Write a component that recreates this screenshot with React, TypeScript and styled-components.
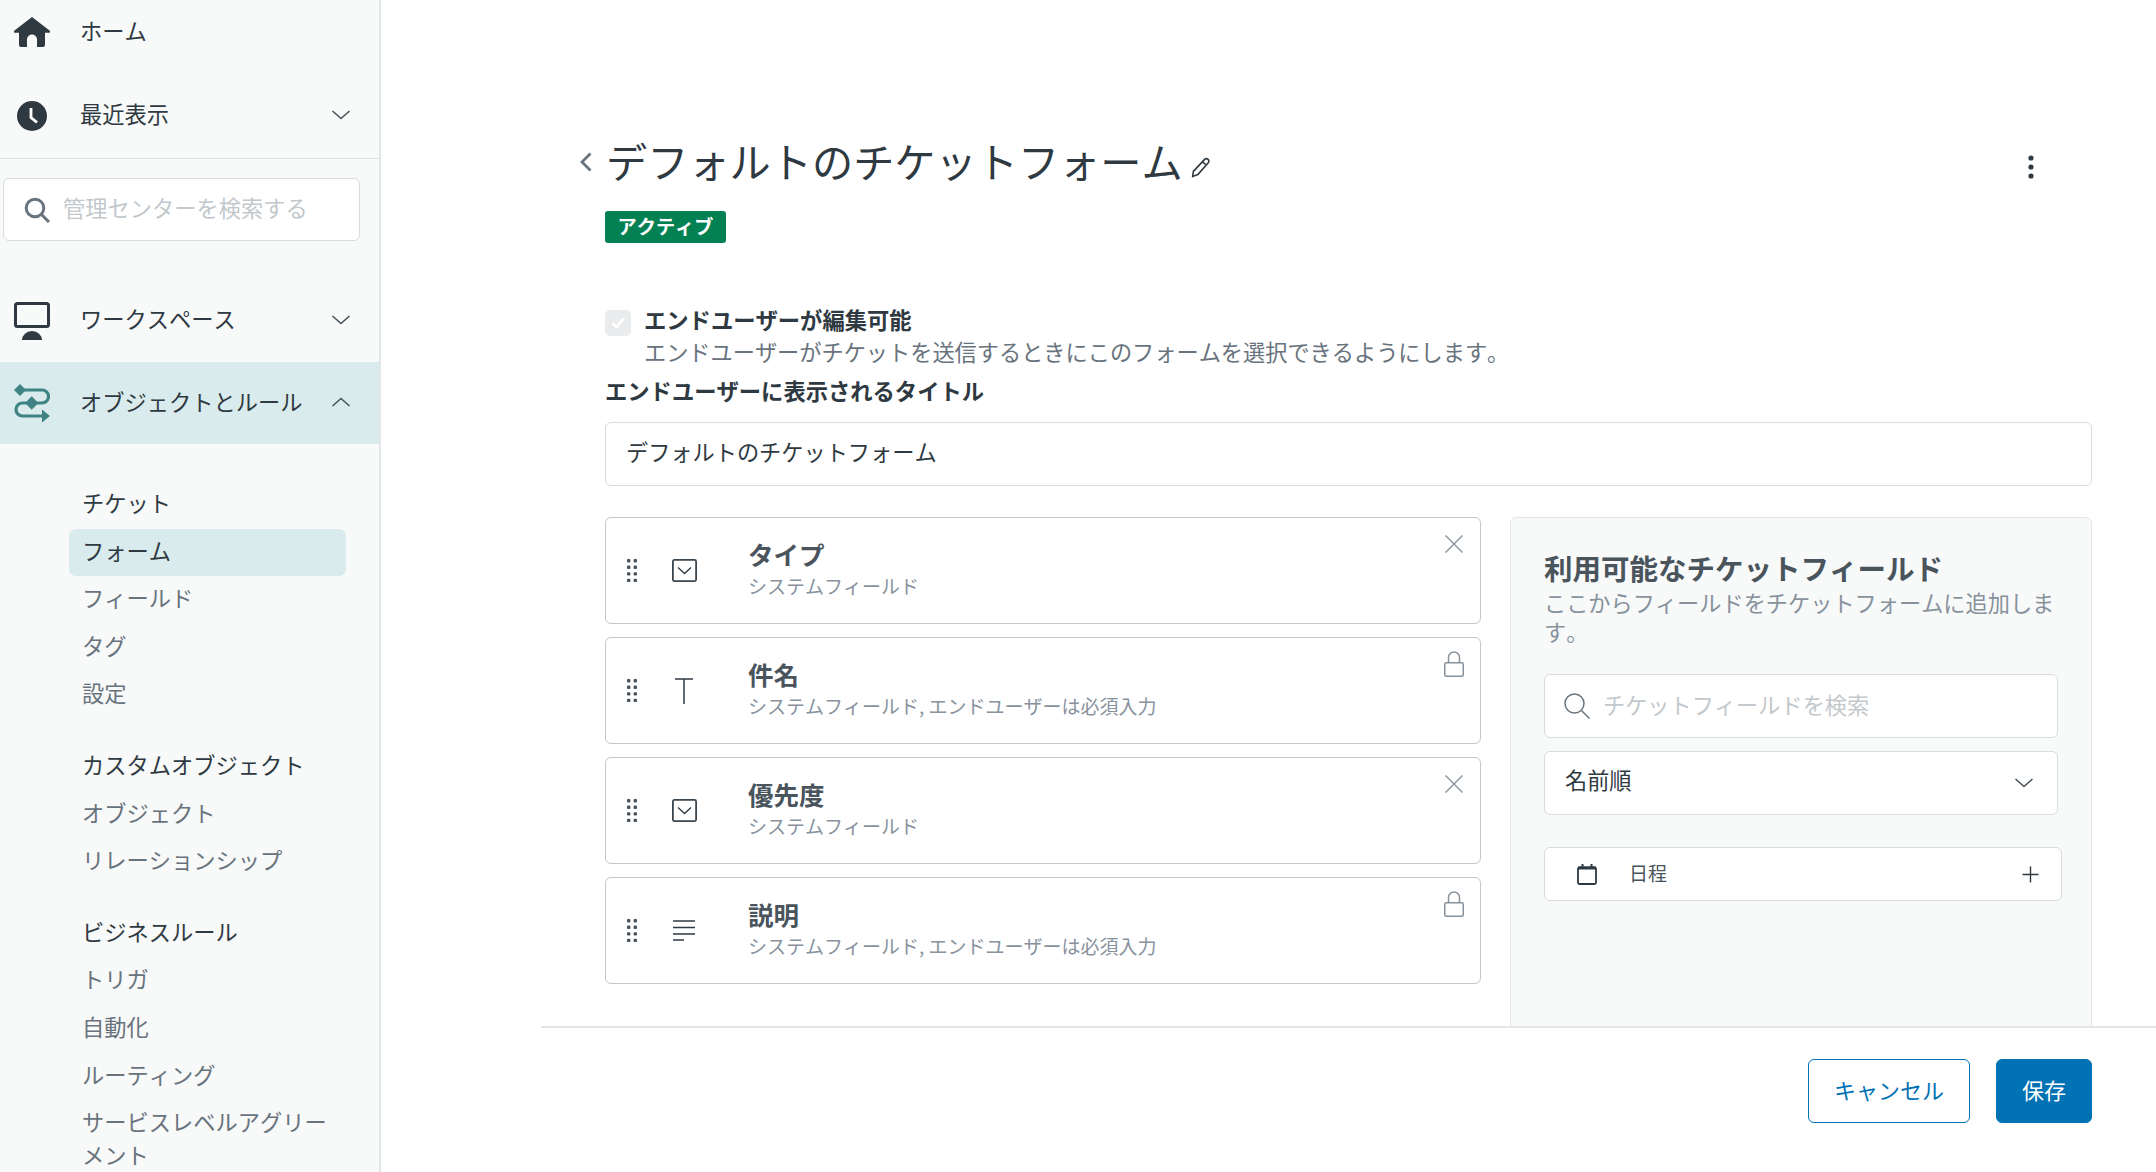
import React from "react";
import styled, { createGlobalStyle } from "styled-components";

const Global = createGlobalStyle`
  html, body { margin: 0; padding: 0; height: 100%; overflow: hidden; background: #fff; }
  #root { height: 100%; }
  * { box-sizing: border-box; }
  body {
    font-family: "Noto Sans CJK JP", "Noto Sans", sans-serif;
    color: #2f3941;
    font-kerning: none;
    text-spacing-trim: space-all;
  }
`;

const Page = styled.div`
  display: flex;
  width: 2156px;
  height: 1172px;
  overflow: hidden;
`;

const Sidebar = styled.aside`
  width: 381px;
  flex: none;
  height: 100%;
  background: #f8f9f9;
  border-right: 2px solid #e3e6e8;
  overflow: hidden;
`;

const TopNav = styled.div`
  border-bottom: 1px solid #dfe2e4;
  height: 159px;
`;

const NavRow = styled.div<{ $active?: boolean; $h?: number; $mb?: number }>`
  display: flex;
  align-items: center;
  height: ${(p) => p.$h ?? 83}px;
  margin-bottom: ${(p) => p.$mb ?? 0}px;
  padding: 0 28px 0 14px;
  background: ${(p) => (p.$active ? "#d9ebec" : "transparent")};
  font-size: 22.25px;
  color: #2f3941;
`;

const NavIconBox = styled.span`
  width: 36px;
  flex: none;
  display: flex;
  justify-content: center;
  align-items: center;
  margin-right: 30px;
`;

const NavLabel = styled.span`
  flex: 1;
  white-space: nowrap;
  padding-bottom: 5px;
`;

const NavChevron = styled.span`
  display: flex;
  padding-bottom: 2px;
`;

const SideSearch = styled.div`
  display: flex;
  align-items: center;
  width: 357px;
  height: 63px;
  margin: 19px 0 38px 3px;
  padding-left: 20px;
  background: #fff;
  border: 1px solid #d8dcde;
  border-radius: 6px;
  font-size: 22.25px;
  color: #c2c8cc;
  gap: 13px;
  white-space: nowrap;
`;

const Placeholder = styled.span`
  padding-bottom: 5px;
`;

const SubNav = styled.div`
  padding: 37px 33px 0 69px;
  display: flex;
  flex-direction: column;
  gap: 24px;
`;

const SubGroup = styled.div`
  display: flex;
  flex-direction: column;
`;

const SubItem = styled.div<{ $head?: boolean; $active?: boolean }>`
  min-height: 47.6px;
  padding: 5px 13px 9.5px;
  line-height: 33px;
  font-size: 22.25px;
  border-radius: 7px;
  color: ${(p) => (p.$head || p.$active ? "#2f3941" : "#68737d")};
  background: ${(p) => (p.$active ? "#d9ebec" : "transparent")};
`;

const Main = styled.main`
  flex: 1;
  min-width: 0;
  display: flex;
  flex-direction: column;
  padding-left: 160px;
  height: 100%;
`;

const Body = styled.div`
  height: 1026px;
  flex: none;
  overflow: hidden;
  padding: 134px 64px 0 64px;
`;

const TitleRow = styled.div`
  display: flex;
  align-items: center;
  height: 56px;
  margin-left: -25px;
`;

const BackIcon = styled.svg`
  flex: none;
  margin-right: 14px;
`;

const Title = styled.h1`
  margin: 0;
  padding-bottom: 5px;
  font-size: 41.2px;
  font-weight: 400;
  line-height: 56px;
  color: #2f3941;
  white-space: nowrap;
`;

const PencilIcon = styled.svg`
  flex: none;
  margin: 10px 0 0 8px;
`;

const KebabIcon = styled.svg`
  flex: none;
  margin-left: auto;
  margin-right: 58px;
  margin-top: 10px;
`;

const Badge = styled.div`
  display: flex;
  align-items: center;
  justify-content: center;
  width: 121px;
  height: 32px;
  margin-top: 21px;
  padding-bottom: 2px;
  background: #038153;
  border-radius: 3px;
  color: #fff;
  font-size: 19.2px;
  font-weight: 700;
`;

const CheckRow = styled.div`
  display: flex;
  margin-top: 60px;
`;

const CheckBox = styled.span`
  width: 26px;
  height: 26px;
  flex: none;
  margin: 7px 13px 0 0;
  background: #e9ebed;
  border-radius: 5px;
  display: flex;
  align-items: center;
  justify-content: center;
`;

const CheckText = styled.div`
  font-size: 22.2px;
  line-height: 32px;
`;

const BoldLabel = styled.div`
  font-size: 22.3px;
  line-height: 32px;
  font-weight: 700;
  color: #2f3941;
`;

const Hint = styled.div`
  color: #68737d;
  white-space: nowrap;
`;

const TitleLabel = styled(BoldLabel)`
  margin-top: 7px;
`;

const TextField = styled.div`
  height: 64px;
  margin-top: 16px;
  padding: 0 0 6px 20px;
  display: flex;
  align-items: center;
  border: 1px solid #d8dcde;
  border-radius: 6px;
  font-size: 22.2px;
  color: #2f3941;
  background: #fff;
`;

const Columns = styled.div`
  display: flex;
  gap: 29px;
  margin-top: 31px;
  align-items: flex-start;
`;

const FieldList = styled.div`
  width: 876px;
  flex: none;
  display: flex;
  flex-direction: column;
  gap: 13px;
`;

const FieldCard = styled.div`
  position: relative;
  display: flex;
  align-items: center;
  height: 107px;
  padding-left: 21px;
  border: 1px solid #c2c8cc;
  border-radius: 6px;
  background: #fff;
`;

const Grip = styled.svg`
  flex: none;
  margin-right: 34px;
`;

const TypeIconBox = styled.span`
  width: 26px;
  flex: none;
  display: flex;
  justify-content: center;
  margin-right: 51px;
`;

const FieldText = styled.div`
  padding-bottom: 1px;
`;

const FieldName = styled.div`
  font-size: 25.5px;
  font-weight: 700;
  line-height: 32px;
  color: #49545c;
`;

const FieldSub = styled.div`
  font-size: 19px;
  line-height: 32px;
  color: #87929d;
`;

const CornerIcon = styled.svg<{ $top: number }>`
  position: absolute;
  top: ${(p) => p.$top}px;
  right: 16px;
`;

const Panel = styled.section`
  flex: 1;
  min-width: 0;
  height: 620px;
  padding: 31px 33px 0;
  background: #f8f9f9;
  border: 1px solid #e3e6e8;
  border-radius: 6px;
`;

const PanelTitle = styled.h2`
  margin: 0;
  font-size: 28.5px;
  line-height: 38px;
  font-weight: 700;
  color: #49545c;
  white-space: nowrap;
`;

const PanelHint = styled.p`
  margin: 1px 0 0;
  font-size: 22.2px;
  line-height: 29px;
  color: #87929d;
`;

const PanelSearch = styled.div`
  display: flex;
  align-items: center;
  gap: 13px;
  height: 64px;
  margin-top: 28px;
  padding-left: 19px;
  background: #fff;
  border: 1px solid #d8dcde;
  border-radius: 6px;
  font-size: 22.2px;
  color: #c2c8cc;
`;

const PanelSelect = styled.div`
  display: flex;
  align-items: center;
  justify-content: space-between;
  height: 64px;
  margin-top: 13px;
  padding: 0 23px 0 20px;
  background: #fff;
  border: 1px solid #d8dcde;
  border-radius: 6px;
  font-size: 22.2px;
  color: #2f3941;
`;

const SelectValue = styled.span`
  padding-bottom: 8px;
`;

const AvailableCard = styled.div`
  display: flex;
  align-items: center;
  width: 518px;
  height: 54px;
  margin-top: 32px;
  padding: 0 22px 0 32px;
  background: #fff;
  border: 1px solid #d8dcde;
  border-radius: 6px;
  font-size: 19px;
  color: #49545c;
`;

const AvailableName = styled.span`
  flex: 1;
  margin-left: 32px;
  padding-bottom: 4px;
`;

const Footer = styled.footer`
  flex: 1;
  display: flex;
  justify-content: flex-end;
  align-items: flex-start;
  gap: 26px;
  padding: 31px 64px 0 0;
  border-top: 2px solid #e3e6e8;
  background: #fff;
`;

const Button = styled.button<{ $primary?: boolean }>`
  height: 64px;
  width: ${(p) => (p.$primary ? 96 : 162)}px;
  padding: 0 0 5px;
  border-radius: 6px;
  border: 1px solid #0172b4;
  background: ${(p) => (p.$primary ? "#0172b4" : "#fff")};
  color: ${(p) => (p.$primary ? "#fff" : "#0172b4")};
  font-family: inherit;
  font-size: 22px;
`;

const Chevron = ({ up, color = "#49545c" }: { up?: boolean; color?: string }) => (
  <svg width="20" height="12" viewBox="0 0 20 12" fill="none">
    <path d={up ? "M1.5 10 L10 2.5 L18.5 10" : "M1.5 2 L10 9.5 L18.5 2"} stroke={color} strokeWidth="1.6" />
  </svg>
);

const HomeIcon = () => (
  <svg width="36" height="30" viewBox="0 0 36 30">
    <path
      d="M18 0 L35.5 13.6 a1.2 1.2 0 0 1 -.7 2.2 H31 V28 a2 2 0 0 1 -2 2 H23 V22.5 a5 5 0 0 0 -10 0 V30 H7 a2 2 0 0 1 -2 -2 V15.8 H1.2 a1.2 1.2 0 0 1 -.7 -2.2 Z"
      fill="#2f3941"
    />
  </svg>
);

const ClockIcon = () => (
  <svg width="30" height="30" viewBox="0 0 30 30">
    <circle cx="15" cy="15" r="15" fill="#2f3941" />
    <path d="M14 7 V16.5 L20 21.5" fill="none" stroke="#fff" strokeWidth="2.8" />
  </svg>
);

const MonitorIcon = () => (
  <svg width="36" height="38" viewBox="0 0 36 38">
    <rect x="1.5" y="1.5" width="33" height="23" rx="2" fill="none" stroke="#2f3941" strokeWidth="3" />
    <path d="M8 38 a10 9 0 0 1 20 0 Z" fill="#2f3941" />
  </svg>
);

const ObjectsIcon = () => (
  <svg width="36" height="39" viewBox="0 0 36 39" fill="none">
    <path d="M6 6 H28 a6.5 6.5 0 0 1 0 13 H8.5 a6.5 6.5 0 0 0 0 13 H30" stroke="#3f8385" strokeWidth="3.2" />
    <path d="M6 0 L12 6 L6 12 L0 6 Z" fill="#3f8385" />
    <path d="M17.7 12.3 L24.4 19 L17.7 25.7 L11 19 Z" fill="#3f8385" />
    <path d="M28 25.5 L36 32 L28 38.5 Z" fill="#3f8385" />
  </svg>
);

const SearchBold = () => (
  <svg width="26" height="26" viewBox="0 0 26 26" fill="none" style={{ flex: "none" }}>
    <circle cx="11" cy="11" r="8.8" stroke="#68737d" strokeWidth="3" />
    <path d="M17 17 L25 25" stroke="#68737d" strokeWidth="3" />
  </svg>
);

const SearchThin = () => (
  <svg width="26" height="26" viewBox="0 0 26 26" fill="none" style={{ flex: "none" }}>
    <circle cx="10.5" cy="10.5" r="9.5" stroke="#68737d" strokeWidth="1.5" />
    <path d="M17.5 17.5 L25.5 25.5" stroke="#68737d" strokeWidth="1.5" />
  </svg>
);

const GripIcon = () => (
  <Grip width="10" height="23" viewBox="0 0 10 23" fill="#49545c">
    {[0, 6.6, 13.2, 19.8].map((y) =>
      [0, 6.6].map((x) => <rect key={`${x}-${y}`} x={x} y={y} width="3.4" height="3.4" rx="1" />)
    )}
  </Grip>
);

const SelectIcon = () => (
  <svg width="25" height="23" viewBox="0 0 25 23" fill="none">
    <rect x="0.9" y="0.9" width="23.2" height="21.2" rx="1.5" stroke="#3a464f" strokeWidth="1.8" />
    <path d="M6 8.5 L12.5 14.5 L19 8.5" stroke="#2f3941" strokeWidth="1.3" />
  </svg>
);

const TextIcon = () => (
  <svg width="20" height="26" viewBox="0 0 20 26" fill="none">
    <path d="M1 1 H19 M10 1 V26" stroke="#2f3941" strokeWidth="1.5" />
  </svg>
);

const LinesIcon = () => (
  <svg width="24" height="21" viewBox="0 0 24 21" fill="none">
    <path d="M1 1 H23 M1 7.5 H23 M1 14 H23 M1 20 H12" stroke="#2f3941" strokeWidth="1.5" />
  </svg>
);

const CloseIcon = () => (
  <CornerIcon $top={16} width="20" height="20" viewBox="0 0 20 20" fill="none">
    <path d="M1.5 1.5 L18.5 18.5 M18.5 1.5 L1.5 18.5" stroke="#87929d" strokeWidth="1.4" />
  </CornerIcon>
);

const LockIcon = () => (
  <CornerIcon $top={13} width="20" height="26" viewBox="0 0 20 26" fill="none">
    <rect x="0.75" y="11.75" width="18.5" height="13.5" rx="1.5" stroke="#87929d" strokeWidth="1.5" />
    <path d="M4.5 11.5 V6.5 a5.5 5.5 0 0 1 11 0 V11.5" stroke="#87929d" strokeWidth="1.5" />
  </CornerIcon>
);

const CalendarIcon = () => (
  <svg width="20" height="21" viewBox="0 0 20 21" fill="none" style={{ flex: "none" }}>
    <rect x="1" y="3.5" width="18" height="16.5" rx="1.5" stroke="#2f3941" strokeWidth="1.8" />
    <path d="M1 4 H19" stroke="#2f3941" strokeWidth="3" />
    <path d="M5.5 0 V5 M14.5 0 V5" stroke="#2f3941" strokeWidth="2" />
  </svg>
);

const PlusIcon = () => (
  <svg width="17" height="17" viewBox="0 0 17 17" fill="none" style={{ flex: "none" }}>
    <path d="M8.5 0.5 V16.5 M0.5 8.5 H16.5" stroke="#2f3941" strokeWidth="1.4" />
  </svg>
);

type Field = { name: string; sub: string; icon: React.ReactNode; corner: React.ReactNode };

const FIELDS: Field[] = [
  { name: "タイプ", sub: "システムフィールド", icon: <SelectIcon />, corner: <CloseIcon /> },
  { name: "件名", sub: "システムフィールド, エンドユーザーは必須入力", icon: <TextIcon />, corner: <LockIcon /> },
  { name: "優先度", sub: "システムフィールド", icon: <SelectIcon />, corner: <CloseIcon /> },
  { name: "説明", sub: "システムフィールド, エンドユーザーは必須入力", icon: <LinesIcon />, corner: <LockIcon /> },
];

const SUBNAV: { head: string; items: string[] }[] = [
  { head: "チケット", items: ["フォーム", "フィールド", "タグ", "設定"] },
  { head: "カスタムオブジェクト", items: ["オブジェクト", "リレーションシップ"] },
  { head: "ビジネスルール", items: ["トリガ", "自動化", "ルーティング", "サービスレベルアグリーメント"] },
];

export default function App() {
  return (
    <Page>
      <Global />
      <Sidebar>
        <TopNav>
          <NavRow $h={64} $mb={10}>
            <NavIconBox><HomeIcon /></NavIconBox>
            <NavLabel>ホーム</NavLabel>
          </NavRow>
          <NavRow>
            <NavIconBox><ClockIcon /></NavIconBox>
            <NavLabel>最近表示</NavLabel>
            <NavChevron><Chevron /></NavChevron>
          </NavRow>
        </TopNav>
        <SideSearch>
          <SearchBold />
          <Placeholder>管理センターを検索する</Placeholder>
        </SideSearch>
        <NavRow>
          <NavIconBox><MonitorIcon /></NavIconBox>
          <NavLabel>ワークスペース</NavLabel>
          <NavChevron><Chevron /></NavChevron>
        </NavRow>
        <NavRow $active $h={82}>
          <NavIconBox><ObjectsIcon /></NavIconBox>
          <NavLabel>オブジェクトとルール</NavLabel>
          <NavChevron><Chevron up /></NavChevron>
        </NavRow>
        <SubNav>
          {SUBNAV.map((g) => (
            <SubGroup key={g.head}>
              <SubItem $head>{g.head}</SubItem>
              {g.items.map((it) => (
                <SubItem key={it} $active={it === "フォーム"}>{it}</SubItem>
              ))}
            </SubGroup>
          ))}
        </SubNav>
      </Sidebar>
      <Main>
        <Body>
          <TitleRow>
            <BackIcon width="12" height="20" viewBox="0 0 12 20" fill="none">
              <path d="M10.5 1.5 L2 10 L10.5 18.5" stroke="#68737d" strokeWidth="2.8" />
            </BackIcon>
            <Title>デフォルトのチケットフォーム</Title>
            <PencilIcon width="20" height="21" viewBox="0 0 20 21" fill="none">
              <path
                d="M13.6 2.4 a2.4 2.4 0 0 1 3.5 0 a2.4 2.4 0 0 1 .2 3.4 L6.8 17.6 L1.6 19.6 L2.4 14.4 Z M11.6 4.8 L15.2 8"
                stroke="#2f3941"
                strokeWidth="1.6"
                strokeLinejoin="round"
              />
            </PencilIcon>
            <KebabIcon width="6" height="24" viewBox="0 0 6 24" fill="#2f3941">
              <circle cx="3" cy="3" r="2.6" />
              <circle cx="3" cy="12" r="2.6" />
              <circle cx="3" cy="21" r="2.6" />
            </KebabIcon>
          </TitleRow>
          <Badge>アクティブ</Badge>
          <CheckRow>
            <CheckBox>
              <svg width="14" height="12" viewBox="0 0 14 12" fill="none">
                <path d="M1.5 6 L5.5 10 L12.5 1.5" stroke="#fff" strokeWidth="2.6" />
              </svg>
            </CheckBox>
            <CheckText>
              <BoldLabel>エンドユーザーが編集可能</BoldLabel>
              <Hint>エンドユーザーがチケットを送信するときにこのフォームを選択できるようにします。</Hint>
            </CheckText>
          </CheckRow>
          <TitleLabel>エンドユーザーに表示されるタイトル</TitleLabel>
          <TextField>デフォルトのチケットフォーム</TextField>
          <Columns>
            <FieldList>
              {FIELDS.map((f) => (
                <FieldCard key={f.name}>
                  <GripIcon />
                  <TypeIconBox>{f.icon}</TypeIconBox>
                  <FieldText>
                    <FieldName>{f.name}</FieldName>
                    <FieldSub>{f.sub}</FieldSub>
                  </FieldText>
                  {f.corner}
                </FieldCard>
              ))}
            </FieldList>
            <Panel>
              <PanelTitle>利用可能なチケットフィールド</PanelTitle>
              <PanelHint>ここからフィールドをチケットフォームに追加します。</PanelHint>
              <PanelSearch>
                <SearchThin />
                <Placeholder>チケットフィールドを検索</Placeholder>
              </PanelSearch>
              <PanelSelect>
                <SelectValue>名前順</SelectValue>
                <Chevron />
              </PanelSelect>
              <AvailableCard>
                <CalendarIcon />
                <AvailableName>日程</AvailableName>
                <PlusIcon />
              </AvailableCard>
            </Panel>
          </Columns>
        </Body>
        <Footer>
          <Button>キャンセル</Button>
          <Button $primary>保存</Button>
        </Footer>
      </Main>
    </Page>
  );
}
